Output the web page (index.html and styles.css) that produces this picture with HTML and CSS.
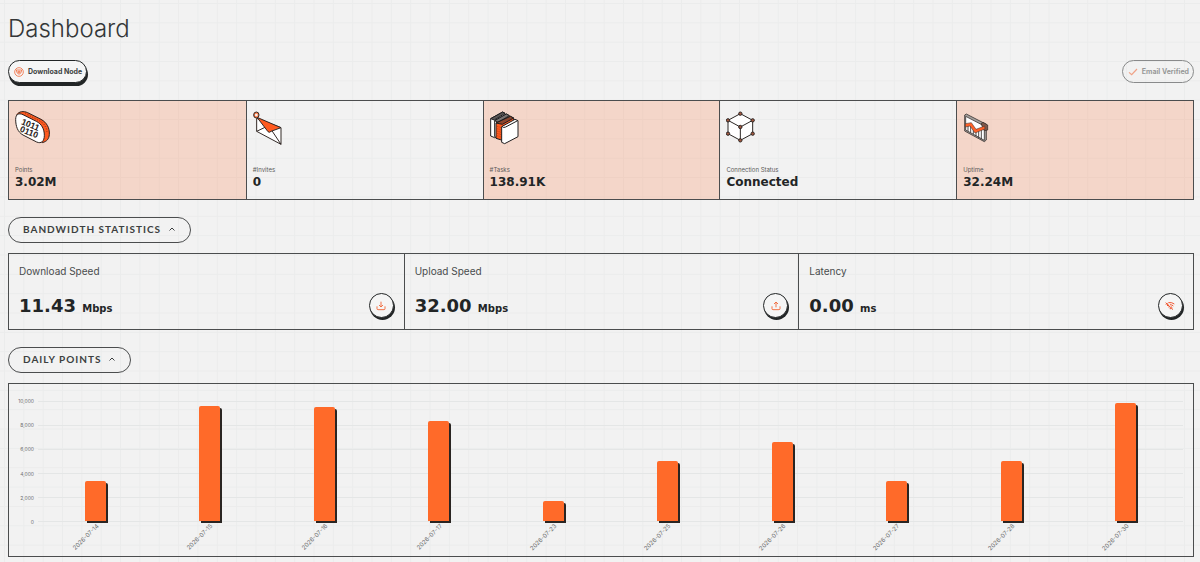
FILE: index.html
```html
<!DOCTYPE html>
<html lang="en">
<head>
<meta charset="utf-8">
<meta name="viewport" content="width=device-width, initial-scale=1">
<title>Dashboard</title>
<link rel="stylesheet" href="styles.css">
</head>
<body>
<main class="page">
  <h1 class="title">Dashboard</h1>
  <div class="actions">
    <button class="btn btn-raised" type="button">
      <svg class="btn-icon" viewBox="0 0 30 30" fill="none" stroke="#f0683a" stroke-width="2.4" stroke-linejoin="round"><circle cx="15" cy="15" r="13"/><path d="M7 9h16M7 9q0 10 8 13 8-3 8-13M12 13h6v3l-3 2-3-2z"/></svg>
      Download Node
    </button>
    <button class="btn btn-verified" type="button" disabled>
      <svg class="btn-icon" viewBox="0 0 30 30" fill="none" stroke="#f0551e" stroke-width="3.6"><path d="M3 16l8 7L27 6"/></svg>
      Email Verified
    </button>
  </div>

  <section class="stats" aria-label="Summary">
    <article class="stat tinted">
      <svg class="stat-icon" viewBox="0 0 105 102" stroke="#2a2220" stroke-width="3" stroke-linejoin="round">
        <path d="M5 12C12 0 26 0 38 5L78 25C96 35 104 51 103 70C102 84 96 91 82 95Z" fill="#ff5a1f"/>
        <path d="M30 7l44 23c14 8 21 20 22 38M38 11l42 22c10 8 15 16 17 28" fill="none" stroke="#8f3516" stroke-width="2" stroke-dasharray="3 5"/>
        <path d="M2 25C2 10 11 5 24 11L64 31C80 39 88 54 88 73C88 91 79 99 65 93L24 72C8 63 2 46 2 25Z" fill="#fff"/>
        <g class="digits"><text x="17" y="39" transform="rotate(22 17 39)">1011</text><text x="13" y="61" transform="rotate(22 13 61)">0110</text></g>
      </svg>
      <span class="stat-label">Points</span><strong class="stat-value">3.02M</strong>
    </article>
    <article class="stat">
      <svg class="stat-icon" viewBox="0 0 105 102" stroke="#332a27" stroke-width="3" stroke-linejoin="round">
        <path d="M11 22v39l73 39V50z" fill="#fff"/>
        <path d="M11 61l27-13M84 100L54 55" fill="none"/>
        <path d="M12 19L45 62q5 4 9-1L84 50z" fill="#ff5a1f"/>
        <ellipse cx="10" cy="12" rx="8" ry="9" fill="#ff7a45"/><circle cx="10" cy="12" r="4" fill="#f2f2f2" stroke="none"/>
      </svg>
      <span class="stat-label">#Invites</span><strong class="stat-value">0</strong>
    </article>
    <article class="stat tinted">
      <svg class="stat-icon" viewBox="0 0 105 102" stroke="#201f20" stroke-width="3" stroke-linejoin="round">
        <path d="M2 23L38 3l7 4v54L14 80 2 75z" fill="#fff"/><path d="M2 23L38 3l7 4-32 20z" fill="#5a5655"/>
        <path d="M14 29L49 9l9 5v55L24 83l-10-6z" fill="#fff"/><path d="M14 29L49 9l9 5-34 20z" fill="#777372"/>
        <path d="M18 36l43-20 10 5v55L37 88 18 82z" fill="#ff5a1f"/><path d="M18 36l43-20 10 5-34 19z" fill="#8b452e"/>
        <path d="M22 45v34M27 46v36M31 48v36" fill="none" stroke="#b03c14" stroke-width="2" stroke-dasharray="3 4"/>
        <path d="M35 47l40-22 9 4v48L44 98l-9-4z" fill="#fff"/><path d="M36 46q4 6 11 2l36-19" fill="none"/>
      </svg>
      <span class="stat-label">#Tasks</span><strong class="stat-value">138.91K</strong>
    </article>
    <article class="stat">
      <svg class="stat-icon" viewBox="0 0 105 102" stroke="#2b2624" stroke-width="3" stroke-linejoin="round">
        <path d="M43 8L80 28v40L43 88 6 68V28z" fill="#fff"/><path d="M6 28l37 20 37-20M43 48v40" fill="none"/>
        <g fill="#a4583f"><circle cx="43" cy="8" r="5"/><circle cx="80" cy="28" r="5"/><circle cx="80" cy="68" r="5"/><circle cx="43" cy="88" r="5"/><circle cx="6" cy="68" r="5"/><circle cx="6" cy="28" r="5"/><circle cx="43" cy="48" r="5"/></g>
      </svg>
      <span class="stat-label">Connection Status</span><strong class="stat-value">Connected</strong>
    </article>
    <article class="stat tinted">
      <svg class="stat-icon" viewBox="0 0 105 102" stroke="#393230" stroke-width="2.4" stroke-linejoin="round">
        <path d="M5 12l5-3 60 31v47l-6 5L5 60z" fill="#a5a09d"/>
        <path d="M8 16l56 29v43L8 57z" fill="#fff"/>
        <path d="M15 43v17M23 43v22M31 55v14M39 58v17M47 55v25M55 55v29" fill="none" stroke-width="2.6"/>
        <path d="M54 38l6-4 14 8v15l-10 2z" fill="#80594b"/>
        <path d="M7 38l18-3 14 20 26-10 1 9-30 12-15-21-14 3z" fill="#ff6128" stroke-width="1.6"/>
      </svg>
      <span class="stat-label">Uptime</span><strong class="stat-value">32.24M</strong>
    </article>
  </section>

  <button class="toggle" type="button" aria-expanded="true" aria-controls="bandwidth">Bandwidth Statistics
    <svg class="chevron" viewBox="0 0 12 12" fill="none" stroke="currentColor" stroke-width="2"><path d="M1 9l5-5 5 5"/></svg>
  </button>
  <section class="bandwidth" id="bandwidth">
    <article class="speed">
      <h2 class="speed-label">Download Speed</h2>
      <div class="speed-row"><p class="speed-value">11.43 <span class="unit">Mbps</span></p>
        <span class="badge"><svg viewBox="0 0 30 30" fill="none" stroke="#f0683a" stroke-width="2.8"><path d="M15 2v16M9 12l6 6 6-6M3 16v7q0 3 3 3h18q3 0 3-3v-7"/></svg></span></div>
    </article>
    <article class="speed">
      <h2 class="speed-label">Upload Speed</h2>
      <div class="speed-row"><p class="speed-value">32.00 <span class="unit">Mbps</span></p>
        <span class="badge"><svg viewBox="0 0 30 30" fill="none" stroke="#f0683a" stroke-width="2.8"><path d="M15 19V3M9 9l6-6 6 6M3 16v7q0 3 3 3h18q3 0 3-3v-7"/></svg></span></div>
    </article>
    <article class="speed">
      <h2 class="speed-label">Latency</h2>
      <div class="speed-row"><p class="speed-value">0.00 <span class="unit">ms</span></p>
        <span class="badge"><svg viewBox="0 0 30 30" fill="none" stroke="#f0552e" stroke-width="3"><path d="M2 5l22 21M10 5q10-2 18 4M2 10l6-3M15 11q6 0 10 4M6 14l6-2M18 17l4 3M10 18l5-1M14 23h5"/></svg></span></div>
    </article>
  </section>

  <button class="toggle" type="button" aria-expanded="true" aria-controls="daily">Daily Points
    <svg class="chevron" viewBox="0 0 12 12" fill="none" stroke="currentColor" stroke-width="2"><path d="M1 9l5-5 5 5"/></svg>
  </button>
  <section class="chart" id="daily">
    <div class="y-axis"><span>10,000</span><span>8,000</span><span>6,000</span><span>4,000</span><span>2,000</span><span>0</span></div>
    <div class="plot">
      <div class="slot"><div class="bar" style="height:33%"></div></div>
      <div class="slot"><div class="bar" style="height:96%"></div></div>
      <div class="slot"><div class="bar" style="height:95%"></div></div>
      <div class="slot"><div class="bar" style="height:83%"></div></div>
      <div class="slot"><div class="bar" style="height:16.5%"></div></div>
      <div class="slot"><div class="bar" style="height:50%"></div></div>
      <div class="slot"><div class="bar" style="height:66%"></div></div>
      <div class="slot"><div class="bar" style="height:33%"></div></div>
      <div class="slot"><div class="bar" style="height:50%"></div></div>
      <div class="slot"><div class="bar" style="height:98.5%"></div></div>
    </div>
    <div class="x-axis">
      <span class="tick"><span class="date">2026-07-14</span></span>
      <span class="tick"><span class="date">2026-07-15</span></span>
      <span class="tick"><span class="date">2026-07-16</span></span>
      <span class="tick"><span class="date">2026-07-17</span></span>
      <span class="tick"><span class="date">2026-07-23</span></span>
      <span class="tick"><span class="date">2026-07-25</span></span>
      <span class="tick"><span class="date">2026-07-26</span></span>
      <span class="tick"><span class="date">2026-07-27</span></span>
      <span class="tick"><span class="date">2026-07-28</span></span>
      <span class="tick"><span class="date">2026-07-30</span></span>
    </div>
  </section>
</main>
</body>
</html>
```
FILE: styles.css
```css
:root {
  --ink: #222526;
  --line: #4b4d4e;
  --orange: #ff6a29;
  --wide: "DejaVu Sans", sans-serif;
}

* { box-sizing: border-box; }

body {
  margin: 0;
  color: var(--ink);
  font-family: Inter, "Liberation Sans", sans-serif;
  background-color: #f2f2f2;
  background-image:
    linear-gradient(to right, #ebecec 1px, transparent 1px),
    linear-gradient(to bottom, #ebecec 1px, transparent 1px);
  background-size: calc(100vw / 62) calc(100vw / 62);
  background-position: 4px 3px;
}

.page { padding: 13px 6px 5px 8px; }

.title {
  margin: 0;
  font-size: 24px;
  line-height: 32px;
  font-weight: 300;
  color: #343738;
}

.actions {
  display: flex;
  justify-content: space-between;
  align-items: flex-start;
  margin: 15px 0 17px;
}

.btn {
  display: flex;
  align-items: center;
  gap: 4px;
  height: 23px;
  padding: 0 4px 0 5px;
  border: 1px solid var(--ink);
  border-radius: 12px;
  background: #f5f5f5;
  color: #3c3f40;
  font: bold 7px/10px Inter, sans-serif;
}
.btn-icon { width: 10px; height: 10px; }
.btn-raised { box-shadow: 1px 3px 0 var(--ink); }
.btn-verified { opacity: 0.5; background: transparent; }

.stats {
  display: grid;
  grid-template-columns: repeat(5, 1fr);
  border: 1px solid var(--line);
}
.stat {
  display: flex;
  flex-direction: column;
  align-items: flex-start;
  padding: 10px 7px 9px 6px;
}
.stat + .stat, .speed + .speed { border-left: 1px solid var(--line); }
.tinted { background: rgba(255, 106, 41, 0.2); }
.stat-icon { width: 35px; height: 34px; margin-bottom: 21px; }
.digits {
  font: bold 26px "Liberation Sans", sans-serif;
  fill: #2a2220;
  stroke: none;
}
.stat-label { font-size: 6px; line-height: 8px; color: #5b5a5a; }
.stat-value { font: bold 12px/16px var(--wide); }

.toggle {
  display: flex;
  align-items: center;
  gap: 8px;
  height: 26px;
  margin: 17px 0 10px;
  padding: 0 15px 2px 14px;
  border: 1px solid var(--line);
  border-radius: 13px;
  background: transparent;
  color: #3c3f40;
  font: bold 10px/14px Lato, sans-serif;
  letter-spacing: 1px;
  text-transform: uppercase;
}
.chevron { width: 6px; height: 6px; }

.bandwidth {
  display: grid;
  grid-template-columns: repeat(3, 1fr);
  border: 1px solid var(--line);
}
.speed { padding: 10px 9px 7px 10px; }
.speed-label {
  margin: 0 0 15px;
  font-size: 10px;
  line-height: 14px;
  font-weight: 400;
  color: #494c4d;
}
.speed-row {
  display: flex;
  justify-content: space-between;
  align-items: flex-start;
}
.speed-value { margin: 0; font: bold 18px/26px var(--wide); }
.unit { font-size: 10px; }
.badge {
  display: flex;
  align-items: center;
  justify-content: center;
  width: 25px;
  height: 25px;
  margin-right: 1px;
  border: 1px solid var(--ink);
  border-radius: 50%;
  background: #f5f5f5;
  box-shadow: 1px 2px 0 var(--ink);
}
.badge svg { width: 10px; height: 10px; }

.chart {
  display: grid;
  grid-template-columns: 25px 1fr;
  grid-template-rows: 121px 34px;
  column-gap: 4px;
  padding: 17px 10px 0 0;
  border: 1px solid var(--line);
  color: #6d6e6f;
  font-size: 5px;
  line-height: 6px;
}
.y-axis {
  display: flex;
  flex-direction: column;
  justify-content: space-between;
  margin: -3px 0;
  text-align: right;
}
.plot {
  display: flex;
  background: repeating-linear-gradient(to bottom, #e4e6e6 0 1px, transparent 1px 24px);
}
.slot {
  flex: 1;
  display: flex;
  justify-content: center;
  align-items: flex-end;
  padding-bottom: 1px;
}
.bar {
  width: 21px;
  background: var(--orange);
  border-radius: 2px 2px 0 0;
  box-shadow: 2px 2px 0 #2a2522;
}
.x-axis { grid-column: 2; display: flex; }
.tick { flex: 1; padding-right: calc(5% - 2px); text-align: right; }
.date {
  display: inline-block;
  font-size: 6px;
  transform: rotate(-45deg);
  transform-origin: 100% 50%;
}
```
